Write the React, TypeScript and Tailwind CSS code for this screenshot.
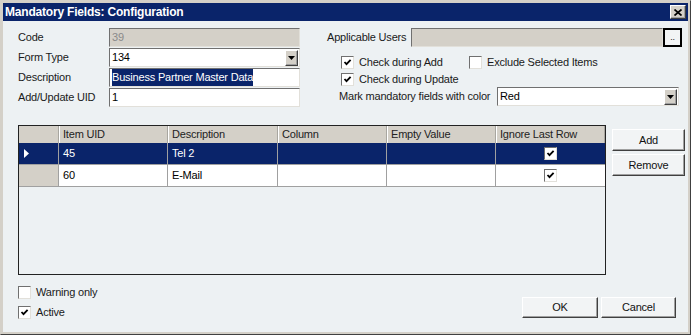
const sunken =
  "border border-t-[#707070] border-l-[#707070] border-b-[#e2e0da] border-r-[#e2e0da]";
const raised =
  "border border-t-white border-l-white border-b-[#404040] border-r-[#404040] shadow-[inset_-1px_-1px_0_#a0a0a0]";

function Check({ checked }: { checked?: boolean }) {
  return (
    <span
      className={`flex h-[13px] w-[13px] shrink-0 items-center justify-center bg-white ${sunken}`}
    >
      {checked && (
        <svg width="9" height="9" viewBox="0 0 9 9">
          <path d="M1.5 4 L3.5 6.2 L7.6 1.8" stroke="#000" strokeWidth="1.8" fill="none" />
        </svg>
      )}
    </span>
  );
}

function CheckLabel({ checked, label }: { checked?: boolean; label: string }) {
  return (
    <div className="flex h-[13px] items-center gap-[5px]">
      <Check checked={checked} />
      <span>{label}</span>
    </div>
  );
}

function DropArrow() {
  return (
    <div className={`flex h-[16px] w-[13px] items-center justify-center bg-[#d4d0c8] ${raised}`}>
      <svg width="7" height="4" viewBox="0 0 7 4">
        <path d="M0 0 H7 L3.5 4 Z" fill="#000" />
      </svg>
    </div>
  );
}

function Button({ label, className }: { label: string; className: string }) {
  return (
    <button className={`flex items-center justify-center bg-[#f2f4f5] text-[#111] ${raised} ${className}`}>
      {label}
    </button>
  );
}

const rows = [
  { uid: "45", desc: "Tel 2", selected: true },
  { uid: "60", desc: "E-Mail", selected: false },
];

const cols = ["w-[109px]", "w-[110px]", "w-[109px]", "w-[109px]", "w-[109px]"];

export default function App() {
  return (
    <div className="flex h-[335px] w-[691px] flex-col border border-t-[#d4d0c8] border-l-[#d4d0c8] border-b-[#404040] border-r-[#404040] bg-[#d4d0c8] p-[2px] font-['Liberation_Sans',sans-serif] text-[11px] tracking-[-0.2px] text-[#1a1a1a]">
      {/* title bar */}
      <div className="flex h-[18px] shrink-0 items-center justify-between bg-[#0a246a] pl-[2px] pr-[2px]">
        <span className="text-[12px] font-bold text-white">Mandatory Fields: Configuration</span>
        <div className={`flex h-[14px] w-[16px] items-center justify-center bg-[#d4d0c8] ${raised}`}>
          <svg width="8" height="7" viewBox="0 0 8 7">
            <path d="M0.5 0.5 L7.5 6.5 M7.5 0.5 L0.5 6.5" stroke="#000" strokeWidth="1.7" />
          </svg>
        </div>
      </div>

      {/* body */}
      <div className="flex flex-1 flex-col bg-[#edf1f3] pl-[15px] pr-[12px] pt-[7px]">
        {/* top */}
        <div className="flex">
          <div className="flex w-[282px] flex-col gap-[1px]">
            <div className="flex h-[19px] items-center">
              <span className="w-[91px]">Code</span>
              <div className={`flex h-[19px] w-[191px] items-center bg-[#d4d0c8] pl-[2px] text-[#8a8a8a] ${sunken}`}>39</div>
            </div>
            <div className="flex h-[19px] items-center">
              <span className="w-[91px]">Form Type</span>
              <div className={`flex h-[19px] w-[191px] items-center justify-between bg-white pl-[2px] pr-[1px] text-black ${sunken}`}>
                <span>134</span>
                <DropArrow />
              </div>
            </div>
            <div className="flex h-[19px] items-center">
              <span className="w-[91px]">Description</span>
              <div className={`flex h-[19px] w-[191px] items-center bg-white pl-[2px] ${sunken}`}>
                <span className="bg-[#0a246a] text-white">Business Partner Master Data</span>
              </div>
            </div>
            <div className="flex h-[19px] items-center">
              <span className="w-[91px]">Add/Update UID</span>
              <div className={`flex h-[19px] w-[191px] items-center bg-white pl-[2px] text-black ${sunken}`}>1</div>
            </div>
          </div>

          <div className="ml-[27px] flex flex-col">
            <div className="flex h-[19px] items-center">
              <span className="w-[84px]">Applicable Users</span>
              <div className={`h-[19px] w-[252px] bg-[#d4d0c8] ${sunken}`} />
              <div className="flex h-[19px] w-[19px] items-end justify-center border-2 border-black bg-[#f2f4f5] pb-[3px] text-[9px] leading-none">
                ..
              </div>
            </div>
            <div className="ml-[14px] mt-[9px] flex">
              <div className="w-[128px]">
                <CheckLabel checked label="Check during Add" />
              </div>
              <CheckLabel label="Exclude Selected Items" />
            </div>
            <div className="ml-[14px] mt-[4px]">
              <CheckLabel checked label="Check during Update" />
            </div>
            <div className="ml-[12px] mt-[1px] flex h-[19px] items-center">
              <span className="w-[158px]">Mark mandatory fields with color</span>
              <div className={`flex h-[19px] w-[182px] items-center justify-between bg-white pl-[2px] pr-[1px] text-black ${sunken}`}>
                <span>Red</span>
                <DropArrow />
              </div>
            </div>
          </div>
        </div>

        {/* grid */}
        <div className="mt-[18px] flex">
          <div className="h-[150px] w-[588px] border border-[#222]">
            <div className="flex h-[17px] bg-[#d4d0c8] text-[#222]">
              <div className="w-[40px] border-r border-r-[#a8a6a0]" />
              {["Item UID", "Description", "Column", "Empty Value", "Ignore Last Row"].map((h, i) => (
                <div
                  key={h}
                  className={`${cols[i]} flex items-center border-l border-l-white border-r border-r-[#a8a6a0] pl-[3px]`}
                >
                  {h}
                </div>
              ))}
            </div>
            {rows.map((r) => (
              <div
                key={r.uid}
                className={`flex h-[22px] border-b border-b-[#a0a0a0] ${r.selected ? "bg-[#0a246a] text-white" : "bg-white text-black"}`}
              >
                <div className={`flex w-[40px] items-center border-r border-r-[#a0a0a0] pl-[5px] ${r.selected ? "" : "bg-[#d4d0c8]"}`}>
                  {r.selected && (
                    <svg width="5" height="9" viewBox="0 0 5 9">
                      <path d="M0 0 L5 4.5 L0 9 Z" fill="#fff" />
                    </svg>
                  )}
                </div>
                <div className={`${cols[0]} flex items-center border-r border-r-[#a0a0a0] pl-[4px]`}>{r.uid}</div>
                <div className={`${cols[1]} flex items-center border-r border-r-[#a0a0a0] pl-[4px]`}>{r.desc}</div>
                <div className={`${cols[2]} border-r border-r-[#a0a0a0]`} />
                <div className={`${cols[3]} border-r border-r-[#a0a0a0]`} />
                <div className={`${cols[4]} flex items-center justify-center`}>
                  <Check checked />
                </div>
              </div>
            ))}
          </div>
          <div className="ml-[6px] flex flex-col">
            <Button label="Add" className="mt-[4px] h-[22px] w-[73px]" />
            <Button label="Remove" className="mt-[3px] h-[22px] w-[73px]" />
          </div>
        </div>

        {/* bottom */}
        <div className="mt-[11px] flex justify-between">
          <div className="flex flex-col gap-[7px]">
            <CheckLabel label="Warning only" />
            <CheckLabel checked label="Active" />
          </div>
          <div className="mt-[11px] flex gap-[3px]">
            <Button label="OK" className="h-[21px] w-[76px]" />
            <Button label="Cancel" className="h-[21px] w-[75px]" />
          </div>
        </div>
      </div>
    </div>
  );
}
